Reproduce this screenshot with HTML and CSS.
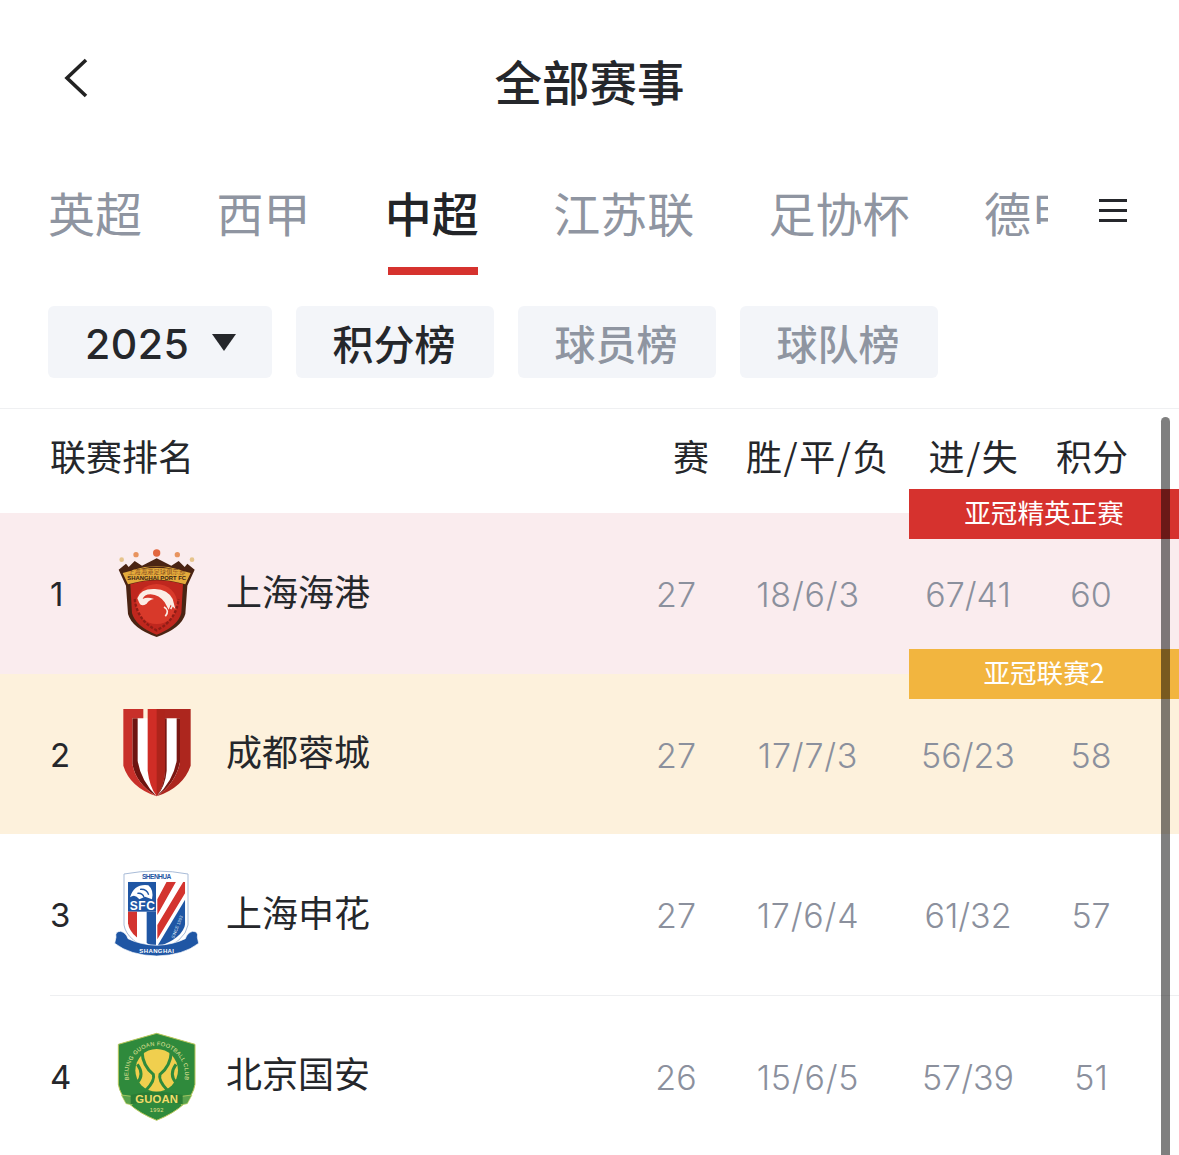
FILE: index.html
```html
<!DOCTYPE html>
<html lang="zh">
<head>
<meta charset="utf-8">
<title>全部赛事</title>
<link rel="stylesheet" href="styles.css">
</head>
<body>
<div class="page">
  <header class="nav">
    <svg class="back" viewBox="0 0 30 46" width="30" height="46"><path d="M25 5 L6 23 L25 41" fill="none" stroke="#222" stroke-width="3.6"/></svg>
    <h1 class="title">全部赛事</h1>
  </header>
  <div class="tabbar">
    <nav class="tabs">
      <span class="tab">英超</span>
      <span class="tab">西甲</span>
      <span class="tab active">中超</span>
      <span class="tab">江苏联</span>
      <span class="tab">足协杯</span>
      <span class="tab">德甲</span>
    </nav>
    <div class="menu"><i></i><i></i><i></i></div>
  </div>
  <div class="filters">
    <div class="chip year">2025<span class="caret"></span></div>
    <div class="chip strong">积分榜</div>
    <div class="chip">球员榜</div>
    <div class="chip">球队榜</div>
  </div>
  <section class="table">
    <div class="thead">
      <div class="thead-name">联赛排名</div>
      <div>赛</div><div class="slash">胜/平/负</div><div class="slash">进/失</div><div>积分</div>
    </div>
    <div class="row row-red">
      <div class="rank">1</div>
      <svg class="logo" viewBox="0 0 330 330" width="110" height="110">
        <circle cx="65" cy="62" r="7" fill="#e6c48c"/><circle cx="108" cy="47" r="8" fill="#e8935e"/><circle cx="170" cy="42" r="11" fill="#e2673f"/><circle cx="232" cy="47" r="8" fill="#e8935e"/><circle cx="276" cy="62" r="7" fill="#e6c48c"/>
        <path d="M56 92 L78 74 L86 84 L104 66 L126 80 L170 58 L214 80 L236 66 L254 84 L262 74 L284 92 L262 140 L256 225 Q244 268 170 294 Q96 268 84 225 L78 140 Z" fill="#4a2413"/>
        <path d="M90 100 Q170 66 250 100 L240 92 Q170 72 100 92 Z" fill="#e4ab3c"/>
        <path d="M91 136 Q170 112 249 136 L244 222 Q234 262 170 287 Q106 262 96 222 Z" fill="#bf271e"/>
        <ellipse cx="170" cy="195" rx="62" ry="60" fill="#d8392a"/>
        <path d="M68 102 Q170 72 272 102 L256 136 Q170 108 84 136 Z" fill="#e4ab3c"/>
        <text class="lg-cn" x="170" y="104" text-anchor="middle" textLength="172" lengthAdjust="spacingAndGlyphs">上海海港足球俱乐部</text>
        <text class="lg-en" x="170" y="123" text-anchor="middle" textLength="176" lengthAdjust="spacingAndGlyphs">SHANGHAI PORT FC</text>
        <path d="M112 178 Q122 148 165 150 Q204 152 218 180 L226 210 L212 197 L206 212 L194 190 Q178 168 152 166 Q132 166 128 180 Q142 172 162 180 Q148 182 140 194 Q124 204 118 192 Z" fill="#fbeee6"/>
        <path d="M204 180 Q226 192 212 210 M192 204 Q210 214 196 232" fill="none" stroke="#fbeee6" stroke-width="5"/>
        <path d="M104 180 Q112 245 170 274 Q228 245 236 180" fill="none" stroke="#8f1d16" stroke-width="7" stroke-dasharray="9 5"/>
      </svg>
      <div class="name">上海海港</div>
      <div class="stat">27</div><div class="stat rec">18/6/3</div><div class="stat">67/41</div><div class="stat">60</div>
    </div>
    <div class="row row-yellow">
      <div class="rank">2</div>
      <svg class="logo" viewBox="0 0 330 330" width="110" height="110">
        <path d="M97 58 H240 V195 Q225 255 170 292 Q115 255 97 195 Z" fill="#fff"/>
        <path d="M97 58 H113 V185 Q122 245 170 292 Q108 255 97 195 Z" fill="#6e1410"/>
        <path d="M70 30 H130 V58 H97 V195 Q108 255 170 292 Q90 265 70 200 Z" fill="#c8302a"/>
        <path d="M143 30 H195 V215 Q192 262 170 292 Q148 262 143 215 Z" fill="#cf2d26"/>
        <path d="M170 30 H195 V215 Q192 262 170 292 Z" fill="#ad241b"/>
        <path d="M230 58 H240 V190 Q226 255 170 292 Q220 245 230 185 Z" fill="#7a1712"/>
        <path d="M195 30 H272 V200 Q250 265 170 292 Q226 255 240 190 V58 H195 Z" fill="#ad261e"/>
        <path d="M195 58 H200 V215 Q196 262 170 292 Q192 262 195 215 Z" fill="#7a1712"/>
      </svg>
      <div class="name">成都蓉城</div>
      <div class="stat">27</div><div class="stat rec">17/7/3</div><div class="stat">56/23</div><div class="stat">58</div>
    </div>
    <div class="row row-line">
      <div class="rank">3</div>
      <svg class="logo" viewBox="0 0 330 330" width="110" height="110">
        <defs><clipPath id="sfc"><path d="M84 65 H256 V190 Q250 235 170 262 Q90 235 84 190 Z"/></clipPath></defs>
        <path d="M72 42 Q170 24 264 42 V195 Q256 245 170 276 Q80 245 72 195 Z" fill="#fff" stroke="#a9bcd8" stroke-width="3"/>
        <text class="lg-band" x="170" y="56" text-anchor="middle" textLength="88">SHENHUA</text>
        <g clip-path="url(#sfc)">
          <rect x="84" y="65" width="172" height="210" fill="#fff"/>
          <rect x="84" y="65" width="84" height="90" fill="#1f56a4"/>
          <rect x="84" y="155" width="27" height="120" fill="#d3342f"/>
          <rect x="140" y="155" width="28" height="120" fill="#1f56a4"/>
          <path d="M200 65 H228 L172 165 V118 Z M250 65 H256 V98 L172 238 V195 Z" fill="#d3342f"/>
          <path d="M256 118 V275 H172 V258 Z" fill="#1f56a4"/>
        </g>
        <path d="M90 112 Q103 70 145 76 Q162 90 156 118 L135 110 L118 118 Q105 100 90 112 Z" fill="#fff"/>
        <path d="M120 88 Q140 86 146 104 M112 100 Q128 98 132 112" fill="none" stroke="#1f56a4" stroke-width="4"/>
        <text class="lg-sfc" x="127" y="150" text-anchor="middle" textLength="76">SFC</text>
        <text class="lg-since" transform="translate(222 236) rotate(-68)">SINCE 1993</text>
        <path d="M48 232 Q44 214 62 214 Q78 218 84 236 Q120 254 170 256 Q220 254 256 236 Q262 218 278 214 Q296 214 292 232 L296 250 Q250 286 170 288 Q90 286 44 250 Z" fill="#1f56a4" stroke="#fff" stroke-width="2"/>
        <text class="lg-ribbon" x="170" y="279" text-anchor="middle" textLength="104">SHANGHAI</text>
      </svg>
      <div class="name">上海申花</div>
      <div class="stat">27</div><div class="stat rec">17/6/4</div><div class="stat">61/32</div><div class="stat">57</div>
    </div>
    <div class="row row-last">
      <div class="rank">4</div>
      <svg class="logo" viewBox="0 0 330 330" width="110" height="110">
        <path d="M55 70 L170 37 L285 70 V190 Q275 255 170 298 Q65 255 55 190 Z" fill="#2f8a3c" stroke="#b9c75a" stroke-width="3"/>
        <circle cx="170" cy="148" r="64" fill="#f0cf4e"/>
        <path d="M126 92 Q128 135 160 160 Q166 178 138 208 M214 92 Q212 135 180 160 Q174 178 202 208 M112 130 Q134 160 112 185 M228 130 Q206 160 228 185" fill="none" stroke="#2f8a3c" stroke-width="9"/>
        <path id="gaArc" d="M86 172 A85 85 0 1 1 254 172" fill="none"/>
        <text class="lg-arc"><textPath href="#gaArc" startOffset="50%" text-anchor="middle">BEIJING GUOAN FOOTBALL CLUB</textPath></text>
        <path d="M64 222 L96 226 L96 252 L78 248 Z M276 222 L244 226 L244 252 L262 248 Z" fill="#5aa24c" stroke="#cfd96e" stroke-width="2"/>
        <path d="M92 222 Q170 202 248 222 L248 250 Q170 232 92 250 Z" fill="#2a7d35"/>
        <text class="lg-guoan" x="170" y="247" text-anchor="middle" textLength="128">GUOAN</text>
        <text class="lg-year" x="170" y="272" text-anchor="middle">1992</text>
      </svg>
      <div class="name">北京国安</div>
      <div class="stat">26</div><div class="stat rec">15/6/5</div><div class="stat">57/39</div><div class="stat">51</div>
    </div>
    <div class="tag tag-red">亚冠精英正赛</div>
    <div class="tag tag-yellow">亚冠联赛2</div>
  </section>
  <div class="scrollbar"></div>
</div>
</body>
</html>
```
FILE: styles.css
```css
* { box-sizing: border-box; }
html, body { margin: 0; padding: 0; background: #fff; overflow: hidden; }
body, .page { font-family: "Inter", "Noto Sans CJK SC", sans-serif; }
.page { position: relative; width: 1179px; height: 1155px; overflow: hidden; color: #25272b; }

.nav { position: relative; height: 164px; }
.back { position: absolute; left: 61px; top: 55px; }
.title { margin: 0; padding-top: 46px; text-align: center; font: 500 47.5px/70px "Noto Sans CJK SC", sans-serif; }

.tabbar { display: flex; align-items: flex-start; height: 112px; padding-left: 48px; }
.tabs { display: flex; gap: 74.4px; width: 1000px; overflow: hidden; height: 112px; }
.tab { position: relative; flex: none; height: 112px; padding-top: 13px; font: 400 47px/70px "Noto Sans CJK SC", sans-serif; color: #8f95a1; }
.tab.active { color: #222428; font-weight: 500; }
.tab.active::after { content: ""; position: absolute; left: 3px; right: 1px; bottom: 1px; height: 8px; background: #d6322e; }
.menu { display: flex; flex-direction: column; gap: 7px; width: 28px; margin: 35px 0 0 51px; }
.menu i { display: block; height: 3px; background: #26282c; }

.filters { display: flex; gap: 24px; padding: 30px 0 30px 48px; border-bottom: 1px solid #eff0f2; height: 133px; }
.chip { display: flex; align-items: center; justify-content: center; width: 198px; height: 72px; padding: 1px 2px 0 0; background: #f3f5f9; border-radius: 6px; font: 500 41px/1 "Noto Sans CJK SC", sans-serif; color: #8f95a1; }
.chip.strong { color: #25272b; }
.chip.year { width: 224px; justify-content: flex-start; padding: 4px 0 0 37px; font: 500 41px/1 "Inter", sans-serif; letter-spacing: 0.5px; color: #25272b; }
.caret { width: 0; height: 0; margin: -4px 0 0 23px; border-left: 12px solid transparent; border-right: 12px solid transparent; border-top: 17px solid #25272b; }

.thead { display: grid; grid-template-columns: 601px 80px 174px 138px 98px; align-items: center; height: 104px; padding: 0 38px 12px 50px; font: 400 36px/1 "Noto Sans CJK SC", sans-serif; text-align: center; color: #25272b; }
.thead-name { text-align: left; }
.slash { letter-spacing: 1.6px; }

.table { position: relative; }
.row { position: relative; display: grid; grid-template-columns: 50px 110px 416px 100px 164px 156px 90px; align-items: center; height: 160px; padding-left: 50px; font: 300 34px/1 "Inter", sans-serif; text-align: center; color: #8b909d; }
.row-red { height: 161px; background: #faecee; }
.row-yellow { background: #fdf1dc; }
.row-line { height: 161px; }
.row-line::after { content: ""; position: absolute; left: 50px; right: 0; bottom: -1px; height: 1px; background: #eeeff1; }
.row-last { height: 162px; }
.stat { padding-top: 3px; }
.rec { letter-spacing: 0.8px; }
.rank { padding-top: 2px; text-align: left; color: #25272b; font-weight: 400; font-size: 33px; }
.logo { display: block; }
.name { position: relative; top: -4px; padding-left: 16px; text-align: left; font: 400 36px/1 "Noto Sans CJK SC", sans-serif; color: #25272b; }

.tag { position: absolute; left: 909px; width: 270px; height: 50px; text-align: center; font: 400 26.6px/46px "Noto Sans CJK SC", "Inter", sans-serif; color: #fff; }
.tag-red { top: 80px; background: #d6322e; }
.tag-yellow { top: 240px; background: #f2b53f; }

.scrollbar { position: absolute; left: 1161px; top: 417px; width: 9px; height: 760px; border-radius: 5px; background: rgba(0, 0, 0, 0.5); }

.logo text { font-family: "Liberation Sans", "Noto Sans CJK SC", sans-serif; }
.lg-cn { font-size: 18px; fill: #5b1a10; }
.lg-en { font-size: 15px; font-weight: 700; fill: #3a1f14; font-family: "Liberation Serif", serif; }
.lg-band { font-size: 20px; font-weight: 700; fill: #1f56a4; }
.lg-sfc { font-size: 36px; font-weight: 700; fill: #fff; }
.lg-since { font-size: 13px; fill: #dfe8f5; }
.lg-ribbon { font-size: 18px; font-weight: 700; fill: #fff; }
.lg-arc { font-size: 17px; fill: #f0eaa0; letter-spacing: 1px; }
.lg-guoan { font-size: 34px; font-weight: 700; fill: #f0dc6a; }
.lg-year { font-size: 17px; fill: #e6e08a; letter-spacing: 1px; }
```
